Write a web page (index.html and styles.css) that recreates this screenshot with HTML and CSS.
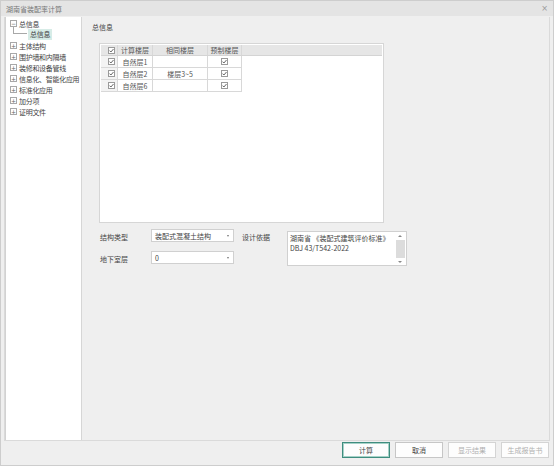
FILE: index.html
```html
<!DOCTYPE html>
<html lang="zh">
<head>
<meta charset="utf-8">
<title>湖南省装配率计算</title>
<link rel="stylesheet" href="styles.css">
</head>
<body>
<div class="window">
  <div class="titlebar"><span class="title">湖南省装配率计算</span><span class="close">×</span></div>
  <div class="main">
    <div class="tree">
      <div class="node"><span class="exp">−</span><span class="lbl">总信息</span></div>
      <div class="node child"><span class="connector"></span><span class="lbl sel">总信息</span></div>
      <div class="node"><span class="exp">+</span><span class="lbl">主体结构</span></div>
      <div class="node"><span class="exp">+</span><span class="lbl">围护墙和内隔墙</span></div>
      <div class="node"><span class="exp">+</span><span class="lbl">装修和设备管线</span></div>
      <div class="node"><span class="exp">+</span><span class="lbl">信息化、智能化应用</span></div>
      <div class="node"><span class="exp">+</span><span class="lbl">标准化应用</span></div>
      <div class="node"><span class="exp">+</span><span class="lbl">加分项</span></div>
      <div class="node"><span class="exp">+</span><span class="lbl">证明文件</span></div>
    </div>
    <div class="content">
      <div class="heading">总信息</div>
      <div class="grid-box">
        <div class="grow head">
          <div class="c c0"><svg class="cb" viewBox="0 0 7 7"><rect x="0.5" y="0.5" width="6" height="6" fill="#fff" stroke="#9a9a9a"/><path d="M1.5 3.6 L2.9 5 L5.5 2" fill="none" stroke="#555" stroke-width="0.9"/></svg></div>
          <div class="c c1">计算楼层</div>
          <div class="c c2">相同楼层</div>
          <div class="c c3">预制楼层</div>
        </div>
        <div class="grow">
          <div class="c c0"><svg class="cb" viewBox="0 0 7 7"><rect x="0.5" y="0.5" width="6" height="6" fill="#fff" stroke="#9a9a9a"/><path d="M1.5 3.6 L2.9 5 L5.5 2" fill="none" stroke="#555" stroke-width="0.9"/></svg></div>
          <div class="c c1">自然层1</div>
          <div class="c c2"></div>
          <div class="c c3"><svg class="cb" viewBox="0 0 7 7"><rect x="0.5" y="0.5" width="6" height="6" fill="#fff" stroke="#9a9a9a"/><path d="M1.5 3.6 L2.9 5 L5.5 2" fill="none" stroke="#555" stroke-width="0.9"/></svg></div>
        </div>
        <div class="grow">
          <div class="c c0"><svg class="cb" viewBox="0 0 7 7"><rect x="0.5" y="0.5" width="6" height="6" fill="#fff" stroke="#9a9a9a"/><path d="M1.5 3.6 L2.9 5 L5.5 2" fill="none" stroke="#555" stroke-width="0.9"/></svg></div>
          <div class="c c1">自然层2</div>
          <div class="c c2">楼层3~5</div>
          <div class="c c3"><svg class="cb" viewBox="0 0 7 7"><rect x="0.5" y="0.5" width="6" height="6" fill="#fff" stroke="#9a9a9a"/><path d="M1.5 3.6 L2.9 5 L5.5 2" fill="none" stroke="#555" stroke-width="0.9"/></svg></div>
        </div>
        <div class="grow">
          <div class="c c0"><svg class="cb" viewBox="0 0 7 7"><rect x="0.5" y="0.5" width="6" height="6" fill="#fff" stroke="#9a9a9a"/><path d="M1.5 3.6 L2.9 5 L5.5 2" fill="none" stroke="#555" stroke-width="0.9"/></svg></div>
          <div class="c c1">自然层6</div>
          <div class="c c2"></div>
          <div class="c c3"><svg class="cb" viewBox="0 0 7 7"><rect x="0.5" y="0.5" width="6" height="6" fill="#fff" stroke="#9a9a9a"/><path d="M1.5 3.6 L2.9 5 L5.5 2" fill="none" stroke="#555" stroke-width="0.9"/></svg></div>
        </div>
      </div>
      <div class="form">
        <div class="form-left">
          <div class="field"><span class="flabel">结构类型</span><div class="combo"><span>装配式混凝土结构</span><span class="arrow"></span></div></div>
          <div class="field second"><span class="flabel">地下室层</span><div class="combo"><span>0</span><span class="arrow"></span></div></div>
        </div>
        <div class="basis">
          <span class="flabel blabel">设计依据</span>
          <div class="memo">
            <div class="memo-text">湖南省 《装配式建筑评价标准》<br>DBJ 43/T542-2022</div>
            <div class="scroll"><span class="up"></span><span class="thumb"></span><span class="down"></span></div>
          </div>
        </div>
      </div>
    </div>
  </div>
  <div class="footer">
    <button class="btn primary">计算</button>
    <button class="btn">取消</button>
    <button class="btn disabled">显示结果</button>
    <button class="btn disabled">生成报告书</button>
  </div>
</div>
</body>
</html>
```

FILE: styles.css
```css
* { box-sizing: border-box; }
html, body { margin: 0; padding: 0; }
body {
  width: 554px;
  height: 466px;
  overflow: hidden;
  font-family: "Noto Sans CJK SC", "Noto Sans", sans-serif;
  font-size: 7px;
  color: #444;
}
.window {
  width: 554px;
  height: 466px;
  border: 1px solid #cdcdcd;
  background: #efefef;
  display: flex;
  flex-direction: column;
}
.titlebar {
  height: 15px;
  flex: none;
  background: #e4e4e4;
  display: flex;
  align-items: center;
  justify-content: space-between;
  padding: 0 5px 0 5px;
}
.title { color: #777; font-size: 7px; }
.close { color: #999; font-size: 8px; font-family: "DejaVu Sans", sans-serif; }
.main {
  height: 424px;
  flex: none;
  margin: 1px 3px 0 3px;
  border: 1px solid #dadada;
  border-top: none;
  display: flex;
}
.tree {
  width: 77px;
  flex: none;
  background: #fff;
  border-left: 1px solid #d2d2d2;
  border-right: 1px solid #d6d6d6;
  padding-top: 1px;
}
.node {
  height: 11px;
  display: flex;
  align-items: center;
  color: #444;
  white-space: nowrap;
}
.exp {
  width: 7px;
  height: 7px;
  margin-left: 4px;
  margin-right: 2px;
  border: 1px solid #a8a8a8;
  font-family: "DejaVu Sans", sans-serif;
  font-size: 6px;
  line-height: 5px;
  text-align: center;
  color: #666;
  flex: none;
  overflow: hidden;
}
.lbl { line-height: 10px; letter-spacing: -0.3px; }
.node.child { align-items: flex-start; }
.connector {
  width: 14px;
  height: 7px;
  margin-left: 7px;
  margin-top: -2px;
  border-left: 1px solid #a8a8a8;
  border-bottom: 1px solid #a8a8a8;
  flex: none;
}
.sel {
  margin-left: 1px;
  padding: 0 2px;
  height: 11px;
  line-height: 11px;
  background: #d7ece7;
}
.content { flex: 1; }
.heading {
  padding: 5px 0 0 10px;
  line-height: 10px;
  color: #444;
}
.grid-box {
  margin: 11px 0 0 17px;
  width: 285px;
  height: 180px;
  background: #fff;
  border: 1px solid #d6d6d6;
  padding: 1px;
}
.grow {
  display: flex;
  height: 12px;
}
.grow.head {
  height: 11px;
  background: #e6e6e6;
  border-bottom: 1px solid #d4d4d4;
}
.c {
  height: 100%;
  display: flex;
  align-items: center;
  justify-content: center;
  border-right: 1px solid #d8d8d8;
  color: #555;
  white-space: nowrap;
}
.grow:not(.head) .c { border-bottom: 1px solid #d8d8d8; }
.grow:not(.head) .c0 { background: #f3f3f3; }
.c0 { width: 17px; justify-content: flex-end; padding-right: 2px; }
.c1 { width: 35px; }
.c2 { width: 55px; }
.c3 { width: 34px; }
.cb { width: 7px; height: 7px; display: block; }
.form {
  display: flex;
  margin: 6px 0 0 18px;
}
.form-left { width: 134px; }
.field { display: flex; height: 13px; }
.field.second { margin-top: 9px; }
.flabel {
  width: 51px;
  line-height: 13px;
  padding-top: 2px;
  color: #444;
}
.combo {
  width: 83px;
  height: 13px;
  background: #fff;
  border: 1px solid #d0d0d0;
  display: flex;
  align-items: center;
  justify-content: space-between;
  padding: 0 4px 0 3px;
  color: #444;
}
.arrow {
  width: 0;
  height: 0;
  border-left: 1.5px solid transparent;
  border-right: 1.5px solid transparent;
  border-top: 2px solid #777;
}
.basis {
  display: flex;
  margin-left: 8px;
}
.blabel { width: 45px; padding-top: 2px; }
.memo {
  width: 120px;
  height: 35px;
  margin-top: 2px;
  background: #fff;
  border: 1px solid #d0d0d0;
  display: flex;
  justify-content: space-between;
}
.memo-text {
  padding: 1px 0 0 2px;
  line-height: 10px;
  color: #444;
  white-space: nowrap;
}
.scroll {
  width: 10px;
  display: flex;
  flex-direction: column;
  align-items: center;
  padding: 3px 0 2px;
  margin-right: 1px;
}
.up, .down {
  width: 0;
  height: 0;
  border-left: 2px solid transparent;
  border-right: 2px solid transparent;
}
.up { border-bottom: 2px solid #888; }
.down { border-top: 2px solid #888; }
.thumb {
  width: 9px;
  flex: 1;
  margin: 3px 0;
  background: #dcdcdc;
}
.footer {
  display: flex;
  justify-content: flex-end;
  gap: 5px;
  padding: 1px 4px 0 0;
}
.btn {
  width: 48px;
  height: 16px;
  padding: 0;
  margin: 0;
  background: #fdfdfd;
  border: 1px solid #c6c6c6;
  font-family: "Noto Sans CJK SC", "Noto Sans", sans-serif;
  font-size: 7px;
  color: #444;
}
.btn.primary {
  border: 1px solid #3f8d7f;
  box-shadow: inset 0 0 0 1px #a6d2c8;
}
.btn.disabled { color: #b0b0b0; border-color: #d4d4d4; }
```
